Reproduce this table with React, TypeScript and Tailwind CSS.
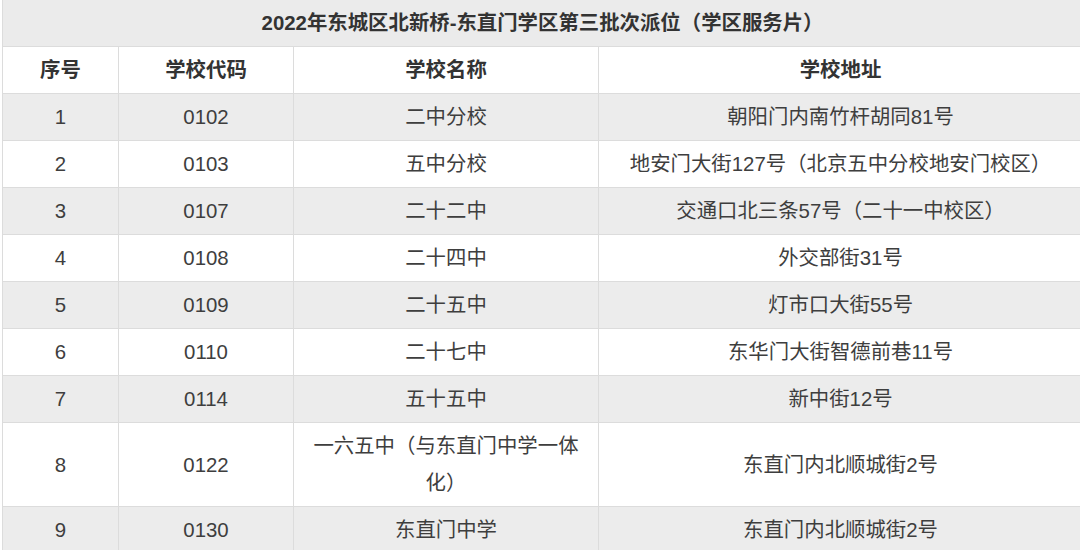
import React from 'react';

interface School {
  no: string;
  code: string;
  name: string;
  address: string;
}

const schools: School[] = [
  { no: '1', code: '0102', name: '二中分校', address: '朝阳门内南竹杆胡同81号' },
  { no: '2', code: '0103', name: '五中分校', address: '地安门大街127号（北京五中分校地安门校区）' },
  { no: '3', code: '0107', name: '二十二中', address: '交通口北三条57号（二十一中校区）' },
  { no: '4', code: '0108', name: '二十四中', address: '外交部街31号' },
  { no: '5', code: '0109', name: '二十五中', address: '灯市口大街55号' },
  { no: '6', code: '0110', name: '二十七中', address: '东华门大街智德前巷11号' },
  { no: '7', code: '0114', name: '五十五中', address: '新中街12号' },
  { no: '8', code: '0122', name: '一六五中（与东直门中学一体化）', address: '东直门内北顺城街2号' },
  { no: '9', code: '0130', name: '东直门中学', address: '东直门内北顺城街2号' },
];

const cell = 'border border-[#dcdcdc] px-2 pt-[5px] pb-[4px] text-center align-middle leading-[37px]';

export default function App() {
  return (
    <div
      className="w-[1080px] h-[550px] overflow-hidden bg-white text-[20.4px] text-[#3e3e3e]"
      style={{ fontFamily: '"Liberation Sans", "Noto Sans CJK SC", sans-serif' }}
    >
      <table className="table-fixed border-collapse w-[1080px] ml-[2px] -mt-[1px]">
        <colgroup>
          <col className="w-[116px]" />
          <col className="w-[175px]" />
          <col className="w-[305px]" />
          <col className="w-[484px]" />
        </colgroup>
        <thead>
          {/* title row */}
          <tr className="bg-[#ebebeb]">
            <th colSpan={4} className={`${cell} font-bold text-[#333]`}>
              2022年东城区北新桥-东直门学区第三批次派位（学区服务片）
            </th>
          </tr>
          <tr className="bg-white">
            <th className={`${cell} font-bold text-[#333]`}>序号</th>
            <th className={`${cell} font-bold text-[#333]`}>学校代码</th>
            <th className={`${cell} font-bold text-[#333]`}>学校名称</th>
            <th className={`${cell} font-bold text-[#333]`}>学校地址</th>
          </tr>
        </thead>
        <tbody>
          {schools.map((s, idx) => (
            <tr key={s.no} className={idx % 2 === 0 ? 'bg-[#ececec]' : 'bg-white'}>
              <td className={cell}>{s.no}</td>
              <td className={cell}>{s.code}</td>
              <td className={cell}>{s.name}</td>
              <td className={cell}>{s.address}</td>
            </tr>
          ))}
        </tbody>
      </table>
    </div>
  );
}
